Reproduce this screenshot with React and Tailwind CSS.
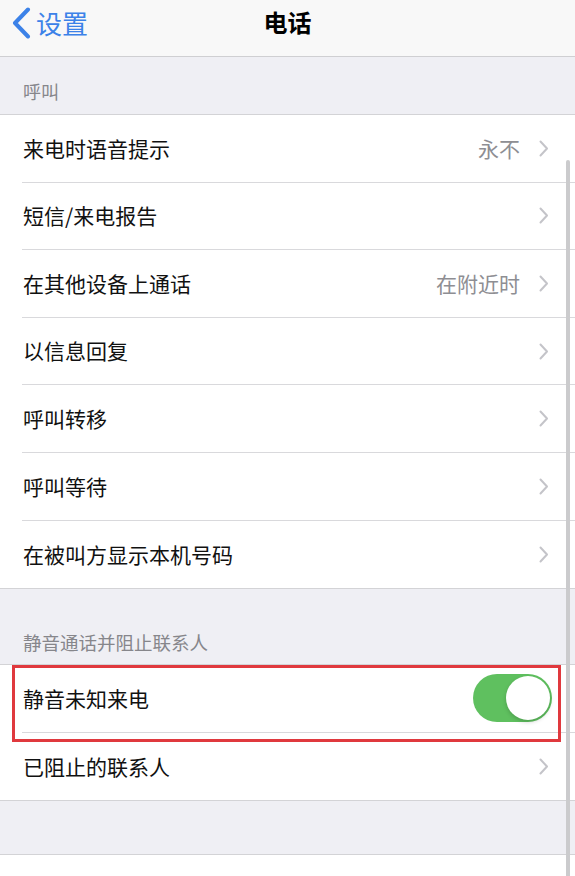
import React, { useState } from 'react';

const font = { fontFamily: '"Noto Sans CJK SC", "Noto Sans", sans-serif' };

const Chevron = () => (
    <svg width="10" height="17" viewBox="0 0 10 17" className="shrink-0">
        <path d="M1.5 1.5 L8 8.5 L1.5 15.5" fill="none" stroke="#c4c4c9" strokeWidth="2" strokeLinecap="round" strokeLinejoin="round" />
    </svg>
);

const Toggle = ({ on, onChange }) => (
    <button
        onClick={() => onChange(!on)}
        className={`shrink-0 w-[79px] h-[48px] rounded-full p-[2px] flex items-center transition-colors ${on ? 'bg-[#5fc05f] justify-end' : 'bg-[#e5e5ea] justify-start'}`}
        aria-label="toggle"
    >
        <span className="w-[44px] h-[44px] rounded-full bg-white shadow-[0_2px_4px_rgba(0,0,0,0.18)]" />
    </button>
);

const Row = ({ label, value, last, children }) => (
    <div className="h-[67.6px] pl-[22px] flex bg-white">
        <div className={`flex-1 flex items-center pr-[26px] ${last ? '' : 'border-b border-[#d9d9dc]'}`}>
            <span className="text-[21px] text-[#111] flex-1 pl-px">{label}</span>
            {value && <span className="text-[21px] text-[#8e8e93] mr-[19px]">{value}</span>}
            {children || <Chevron />}
        </div>
    </div>
);

const callRows = [
    { label: '来电时语音提示', value: '永不' },
    { label: '短信/来电报告' },
    { label: '在其他设备上通话', value: '在附近时' },
    { label: '以信息回复' },
    { label: '呼叫转移' },
    { label: '呼叫等待' },
    { label: '在被叫方显示本机号码' },
];

export default function App() {
    const [silence, setSilence] = useState(true);

    return (
        <div style={font} className="relative w-[575px] h-[876px] overflow-hidden bg-[#efeff4]">
            {/* Nav bar */}
            <div className="h-[57px] bg-[#f8f8f8] border-b border-[#cfcfd2] flex items-start relative">
                <div className="flex items-center pl-[11px] pt-[7px] text-[#3c82e8]">
                    <svg width="22" height="32" viewBox="0 0 22 32">
                        <path d="M17 2.5 L4 16 L17 29.5" fill="none" stroke="#3c82e8" strokeWidth="4" strokeLinecap="round" strokeLinejoin="round" />
                    </svg>
                    <span className="text-[26px] ml-[3px] leading-none">设置</span>
                </div>
                <div className="absolute inset-x-0 top-0 h-[44px] flex items-center justify-center pointer-events-none">
                    <span className="text-[24px] font-bold text-black leading-none">电话</span>
                </div>
            </div>

            {/* Calls */}
            <div className="h-[57px] flex items-end pl-[23px] pb-[9px]">
                <span className="text-[18px] text-[#86868b]">呼叫</span>
            </div>
            <div className="border-y border-[#d3d3d6]">
                {callRows.map((r, i) => (
                    <Row key={r.label} label={r.label} value={r.value} last={i === callRows.length - 1} />
                ))}
            </div>

            {/* Silence & block */}
            <div className="h-[75px] flex items-end pl-[23px] pb-[7px]">
                <span className="text-[18.5px] text-[#86868b]">静音通话并阻止联系人</span>
            </div>
            <div className="border-y border-[#d3d3d6] relative">
                <Row label="静音未知来电">
                    <div className="-mr-[3px]">
                        <Toggle on={silence} onChange={setSilence} />
                    </div>
                </Row>
                <Row label="已阻止的联系人" last />
                {/* highlight frame */}
                <div className="absolute left-[12px] top-0 w-[549px] h-[77px] border-[3px] border-[#e0393e] pointer-events-none" />
            </div>

            <div className="h-[53px]" />
            <div className="border-t border-[#d3d3d6] bg-white h-[30px]" />

            {/* scroll indicator */}
            <div className="absolute right-[5px] top-[160px] w-[4px] h-[730px] rounded-full bg-[#cbcbcd]" />
        </div>
    );
}
